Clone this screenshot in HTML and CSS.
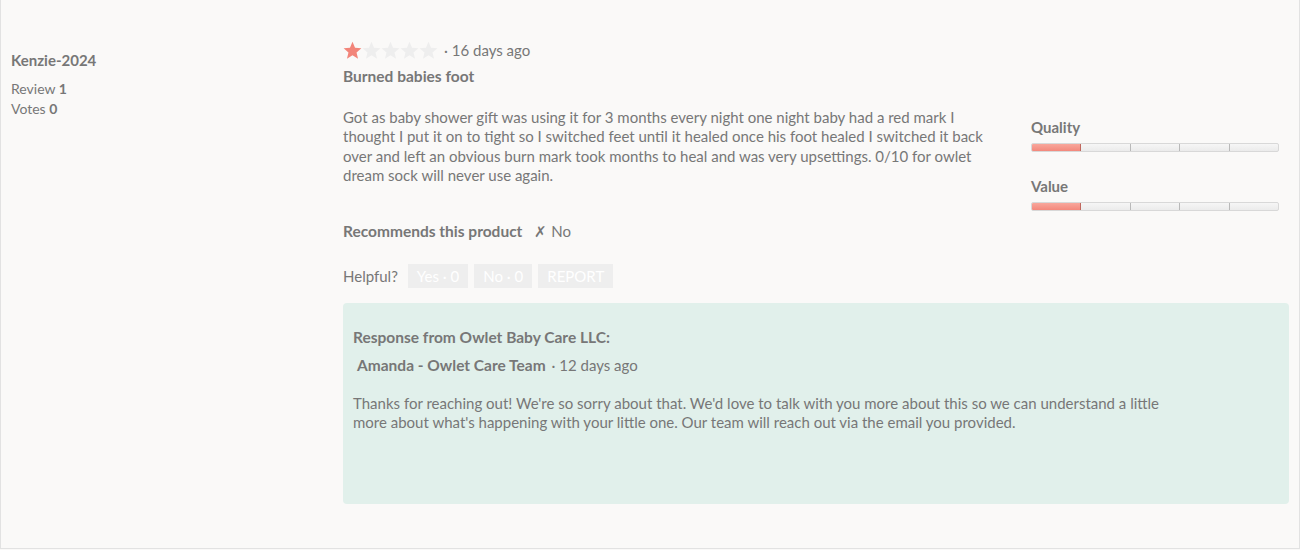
FILE: index.html
```html
<!DOCTYPE html>
<html>
<head>
<meta charset="utf-8">
<link rel="stylesheet" href="styles.css">
</head>
<body>
<div class="review">
  <div class="profile">
    <div class="nick">Kenzie-2024</div>
    <div class="stats">
      <div>Review <b>1</b></div>
      <div>Votes <b>0</b></div>
    </div>
  </div>
  <div class="main">
    <div class="rating-line">
      <span class="stars">
        <svg class="star on" viewBox="0 0 24 24"><path d="M12 1l3.2 7.4 8 .7-6.1 5.3 1.9 7.9L12 18.1l-7 4.2 1.9-7.9L.8 9.1l8-.7z"/></svg>
        <svg class="star" viewBox="0 0 24 24"><path d="M12 1l3.2 7.4 8 .7-6.1 5.3 1.9 7.9L12 18.1l-7 4.2 1.9-7.9L.8 9.1l8-.7z"/></svg>
        <svg class="star" viewBox="0 0 24 24"><path d="M12 1l3.2 7.4 8 .7-6.1 5.3 1.9 7.9L12 18.1l-7 4.2 1.9-7.9L.8 9.1l8-.7z"/></svg>
        <svg class="star" viewBox="0 0 24 24"><path d="M12 1l3.2 7.4 8 .7-6.1 5.3 1.9 7.9L12 18.1l-7 4.2 1.9-7.9L.8 9.1l8-.7z"/></svg>
        <svg class="star" viewBox="0 0 24 24"><path d="M12 1l3.2 7.4 8 .7-6.1 5.3 1.9 7.9L12 18.1l-7 4.2 1.9-7.9L.8 9.1l8-.7z"/></svg>
      </span>
      <span class="date">· 16 days ago</span>
    </div>
    <div class="title">Burned babies foot</div>
    <div class="body-row">
      <p class="text">Got as baby shower gift was using it for 3 months every night one night baby had a red mark I thought I put it on to tight so I switched feet until it healed once his foot healed I switched it back over and left an obvious burn mark took months to heal and was very upsettings. 0/10 for owlet dream sock will never use again.</p>
      <div class="sliders">
        <div class="slider">
          <div class="slider-label">Quality</div>
          <div class="bar"><span class="seg fill"></span><span class="seg"></span><span class="seg"></span><span class="seg"></span><span class="seg"></span></div>
        </div>
        <div class="slider">
          <div class="slider-label">Value</div>
          <div class="bar"><span class="seg fill"></span><span class="seg"></span><span class="seg"></span><span class="seg"></span><span class="seg"></span></div>
        </div>
      </div>
    </div>
    <div class="recommend"><b>Recommends this product</b><span class="no">✗ No</span></div>
    <div class="helpful">
      <span class="hlabel">Helpful?</span>
      <span class="btn">Yes · 0</span>
      <span class="btn">No · 0</span>
      <span class="btn">REPORT</span>
    </div>
    <div class="response">
      <div class="resp-head">Response from Owlet Baby Care LLC:</div>
      <div class="resp-author"><b>Amanda - Owlet Care Team</b> <span class="date">· 12 days ago</span></div>
      <p class="resp-text">Thanks for reaching out! We're so sorry about that. We'd love to talk with you more about this so we can understand a little more about what's happening with your little one. Our team will reach out via the email you provided.</p>
    </div>
  </div>
</div>
</body>
</html>
```
FILE: styles.css
```css
html, body {
  margin: 0;
  padding: 0;
  background: #faf9f8;
}
body {
  font-family: Lato, "Liberation Sans", sans-serif;
  font-size: 15px;
  color: #777;
}
.review {
  display: flex;
  height: 548px;
  border-left: 1px solid #e2e2e2;
  border-right: 1px solid #e2e2e2;
  border-bottom: 1px solid #e2e2e2;
}
.profile {
  width: 332px;
  flex: none;
  padding: 50px 0 0 10px;
  box-sizing: border-box;
}
.nick {
  font-weight: bold;
  font-size: 15px;
  line-height: 20px;
}
.stats {
  margin-top: 9px;
  line-height: 20px;
  font-size: 14px;
}
.stats b { font-weight: bold; }
.main {
  flex: 1;
  padding: 38px 10px 0 10px;
}
.rating-line {
  display: flex;
  align-items: center;
  height: 24px;
}
.stars { display: flex; }
.star {
  width: 19px;
  height: 19px;
  fill: #eeeeee;
}
.star.on { fill: #f2857a; }
.date {
  margin-left: 6px;
  font-size: 15px;
}
.title {
  font-weight: bold;
  font-size: 15.5px;
  line-height: 20px;
  margin-top: 4px;
}
.body-row {
  display: flex;
  margin-top: 22px;
}
.text {
  margin: 0;
  width: 660px;
  line-height: 19.3px;
  font-size: 15px;
}
.sliders {
  margin-left: 28px;
  padding-top: 9px;
  width: 248px;
}
.slider { margin-bottom: 24px; }
.slider:last-child { margin-bottom: 0; }
.slider-label {
  font-weight: bold;
  font-size: 15px;
  line-height: 20px;
  margin-bottom: 6px;
}
.bar {
  display: flex;
  height: 7px;
  border: 1px solid #d8d8d8;
  border-radius: 2px;
  background: linear-gradient(#f6f6f6, #ebebeb);
  overflow: hidden;
}
.seg {
  flex: 1;
  border-right: 1px solid #b9b9b9;
}
.seg:last-child { border-right: none; }
.seg.fill {
  background: linear-gradient(#f8a79c, #f3887c);
  border-right-color: #c0675d;
}
.recommend {
  margin-top: 10px;
  line-height: 20px;
}
.recommend b { font-size: 15.5px; }
.recommend .no { margin-left: 12px; }
.helpful {
  margin-top: 23px;
  display: flex;
  align-items: center;
  gap: 6px;
}
.hlabel { margin-right: 4px; }
.btn {
  display: inline-block;
  background: #eeeeee;
  color: #fff;
  height: 24px;
  line-height: 24px;
  padding: 0 9px;
  font-size: 15px;
}
.response {
  margin-top: 15px;
  background: #e1f0eb;
  border-radius: 4px;
  height: 201px;
  box-sizing: border-box;
  padding: 24px 10px 0 10px;
}
.resp-head {
  font-weight: bold;
  font-size: 15.5px;
  line-height: 20px;
}
.resp-author {
  margin-top: 8px;
  padding-left: 4px;
  line-height: 20px;
}
.resp-author b { font-size: 15.5px; }
.resp-author .date { margin-left: 2px; }
.resp-text {
  margin: 19px 0 0 0;
  width: 820px;
  line-height: 19.3px;
}
```
